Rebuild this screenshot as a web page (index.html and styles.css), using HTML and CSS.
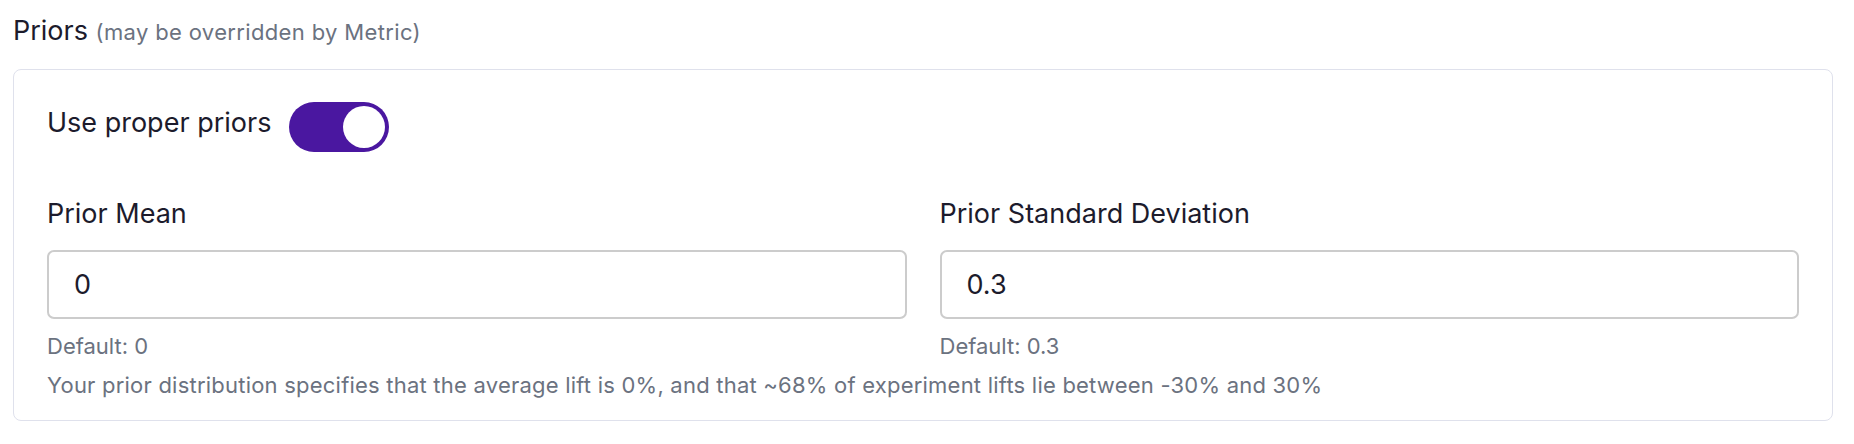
FILE: index.html
```html
<!DOCTYPE html>
<html lang="en">
<head>
<meta charset="utf-8">
<title>Priors</title>
<link rel="stylesheet" href="styles.css">
</head>
<body>
<div class="page">
  <div class="title">Priors <span class="title-note">(may be overridden by Metric)</span></div>
  <div class="card">
    <div class="toggle-row">
      <span class="toggle-label">Use proper priors</span>
      <span class="toggle on"><span class="knob"></span></span>
    </div>
    <div class="fields">
      <div class="field">
        <div class="field-label">Prior Mean</div>
        <div class="input">0</div>
        <div class="hint">Default: 0</div>
      </div>
      <div class="field">
        <div class="field-label">Prior Standard Deviation</div>
        <div class="input">0.3</div>
        <div class="hint">Default: 0.3</div>
      </div>
    </div>
    <div class="summary">Your prior distribution specifies that the average lift is 0%, and that ~68% of experiment lifts lie between -30% and 30%</div>
  </div>
</div>
</body>
</html>
```
FILE: styles.css
```css
* { box-sizing: border-box; }
html, body { margin: 0; padding: 0; background: #ffffff; }
body {
  font-family: Inter, "Noto Sans", "Liberation Sans", sans-serif;
  color: #1c1b2c;
}
.page {
  padding: 13px 21px 0 13px;
}
.title {
  font-size: 27px;
  line-height: 36px;
  margin-bottom: 19px;
}
.title-note {
  font-size: 22px;
  letter-spacing: 0.35px;
  color: #6b7280;
}
.card {
  border: 1px solid #dfe1ec;
  border-radius: 8px;
  padding: 32px 33px 20px 33px;
}
.toggle-row {
  display: flex;
  align-items: flex-start;
  gap: 18px;
}
.toggle-label {
  font-size: 27px;
  line-height: 36px;
  margin-top: 3px;
}
.toggle {
  display: flex;
  align-items: center;
  justify-content: flex-end;
  width: 100px;
  height: 50px;
  border-radius: 25px;
  background: #4a17a0;
  padding: 0 4px;
}
.knob {
  width: 42px;
  height: 42px;
  border-radius: 50%;
  background: #ffffff;
}
.fields {
  display: grid;
  grid-template-columns: 1fr 1fr;
  column-gap: 33px;
  margin-top: 44px;
}
.field-label {
  font-size: 27px;
  line-height: 36px;
  margin-bottom: 18px;
}
.input {
  height: 69px;
  border: 2px solid #cccccc;
  border-radius: 7px;
  padding: 0 25px;
  display: flex;
  align-items: center;
  font-size: 27px;
}
.hint {
  font-size: 22px;
  line-height: 30px;
  color: #6b7280;
  margin-top: 12px;
}
.summary {
  font-size: 22px;
  line-height: 30px;
  letter-spacing: 0.22px;
  color: #6b7280;
  margin-top: 9px;
}
```
